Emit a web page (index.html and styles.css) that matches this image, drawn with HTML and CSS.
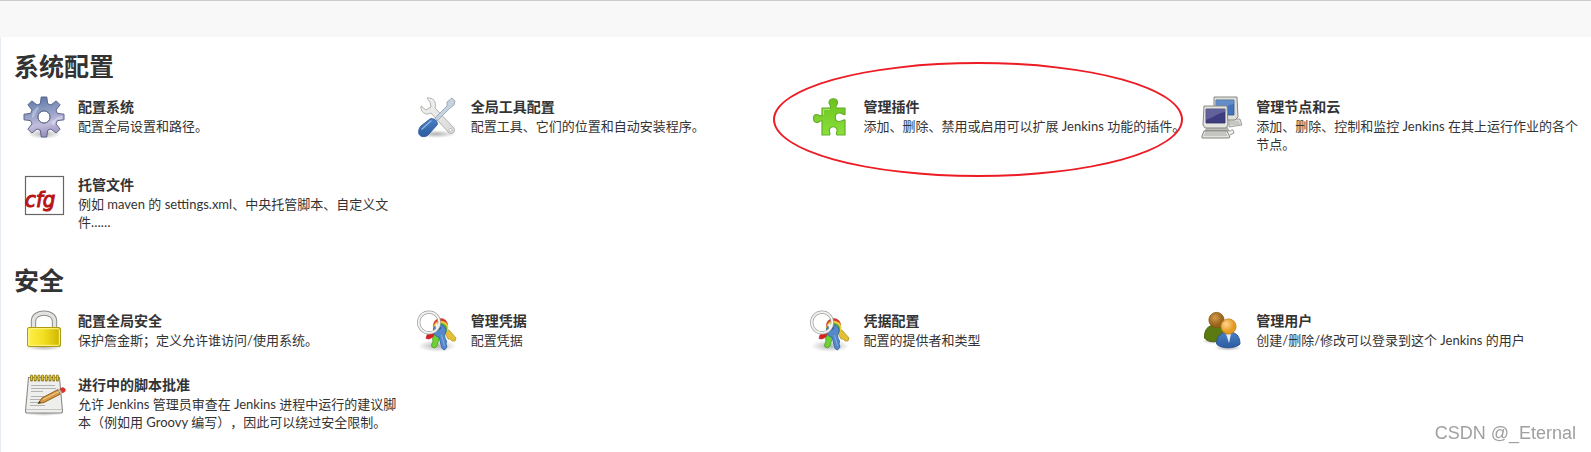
FILE: index.html
```html
<!DOCTYPE html>
<html lang="zh-CN">
<head>
    <meta charset="UTF-8">
    <meta name="viewport" content="width=device-width, initial-scale=1.0">
    <title>系统管理 [Jenkins]</title>
    <link rel="stylesheet" href="styles.css">
</head>
<body>

<svg class="defs" width="0" height="0" aria-hidden="true">
    <defs>
        <radialGradient id="shadow">
            <stop offset="0" stop-color="#000" stop-opacity="0.3"/>
            <stop offset="1" stop-color="#000" stop-opacity="0"/>
        </radialGradient>
        <linearGradient id="gear" x1="0" y1="0" x2="0.2" y2="1">
            <stop offset="0" stop-color="#5673a4"/>
            <stop offset="0.45" stop-color="#8f9dc4"/>
            <stop offset="0.75" stop-color="#c3bddd"/>
            <stop offset="1" stop-color="#9c96c0"/>
        </linearGradient>
        <linearGradient id="metal" x1="0" y1="0" x2="1" y2="1">
            <stop offset="0" stop-color="#f4f4f2"/>
            <stop offset="1" stop-color="#d8d9d7"/>
        </linearGradient>
        <linearGradient id="puzzle" x1="0" y1="0" x2="0" y2="1">
            <stop offset="0" stop-color="#6cc21c"/>
            <stop offset="1" stop-color="#8be03c"/>
        </linearGradient>
        <linearGradient id="yellow" x1="0" y1="0" x2="1" y2="0">
            <stop offset="0" stop-color="#fff04a"/>
            <stop offset="0.5" stop-color="#f2de20"/>
            <stop offset="1" stop-color="#cdb400"/>
        </linearGradient>
        <linearGradient id="blue" x1="0" y1="0" x2="0" y2="1">
            <stop offset="0" stop-color="#4a80c4"/>
            <stop offset="1" stop-color="#2c5ba0"/>
        </linearGradient>
        <radialGradient id="brown" cx="0.4" cy="0.35">
            <stop offset="0" stop-color="#d29a4a"/>
            <stop offset="1" stop-color="#9a621a"/>
        </radialGradient>
        <radialGradient id="orange" cx="0.35" cy="0.35">
            <stop offset="0" stop-color="#ffd590"/>
            <stop offset="1" stop-color="#e59a22"/>
        </radialGradient>
        <symbol id="keys" viewBox="0 0 48 48">
            <ellipse cx="24" cy="39" rx="19" ry="6" fill="url(#shadow)"/>
            <path d="M21 24 14 28 13 31.500 16 32 24 28Z" fill="#dc2020" stroke="#b01818" stroke-width="0.6"/>
            <path d="M20 22C19 13 25 10 30 11.500C34 13 36 17 34.500 22L28 27Z" fill="#d63b2c"/>
            <path d="M31 24 36 23 43 31 42 34 39 34 37 32 35 32Z" fill="#e3bf38" stroke="#b8952a" stroke-width="0.8" stroke-linejoin="round"/>
            <path d="M20 23C20 15 26 12.500 31 14.500C35 16 36.500 20 34.500 25L28 28Z" fill="#edcb3a"/>
            <path d="M22 26 27 28 24 39 22 41 19 40 18.500 38 20 34 19.500 32Z" fill="#6fd136" stroke="#4ba023" stroke-width="0.8" stroke-linejoin="round"/>
            <path d="M20 25C20 18 26 15 30 16.500C34 18 35 22 33 26L28 29Z" fill="#58aa35"/>
            <path d="M20.500 23.500C20.500 18.500 25 17 28.500 18C33 19.500 34.500 24 31.500 28L32 31 33.500 34 33 37 34 40 31.500 43 29 41.500 26 30C23 30 20.500 27 20.500 23.500Z" fill="#5389cb" stroke="#3467a8" stroke-width="0.9" stroke-linejoin="round"/>
            <path d="M28.500 28 31.500 39" stroke="#86afe0" stroke-width="1"/>
            <path d="M23 23 26.500 21" stroke="#2d5994" stroke-width="3" stroke-linecap="round"/>
            <circle cx="16" cy="15.500" r="10.300" fill="none" stroke="#9c9e9b" stroke-width="3.200"/>
            <circle cx="16" cy="15.500" r="10.300" fill="none" stroke="#f2f2f0" stroke-width="1.800"/>
            <path d="M22 18 24 16 25.500 19 23.500 22Z" fill="#f2f2f0"/>
        </symbol>
    </defs>
</svg>

<header class="breadcrumb-bar"></header>

<main class="main-panel">
    <section class="section">
        <h2>系统配置</h2>
        <div class="section-items">
            <a class="item" href="#configure">
                <svg class="icon" viewBox="0 0 48 48" aria-hidden="true">
                    <ellipse cx="24" cy="41" rx="17" ry="5" fill="url(#shadow)"/>
                    <path fill="url(#gear)" fill-rule="evenodd" stroke="#5b6488" stroke-width="1" stroke-linejoin="round" d="M20.400 10.600 21.200 4H26.800L27.600 10.600 30.900 12 36.200 7.900 40.100 11.800 36 17.100 37.400 20.400 44 21.200V26.800L37.400 27.600 36 30.900 40.100 36.200 36.200 40.100 30.900 36 27.600 37.400 26.800 44H21.200L20.400 37.400 17.100 36 11.800 40.100 7.900 36.200 12 30.900 10.600 27.600 4 26.800V21.200L10.600 20.400 12 17.100 7.900 11.800 11.800 7.900 17.100 12ZM24 18a6 6 0 1 0 0 12a6 6 0 1 0 0-12Z"/>
                    <path d="M12 25c4-1 3-6 6-8 2-2 0-4 0-4l-5 5-1 4z" fill="#fff" opacity="0.3"/>
                    <path d="M31 30c1-4 5-3 6-6l5-1v3l-6 1-2 6z" fill="#fff" opacity="0.3"/>
                    <circle cx="24" cy="24" r="6" fill="#fff" stroke="#5b6488" stroke-width="1"/>
                </svg>
                <dl class="text">
                    <dt>配置系统</dt>
                    <dd>配置全局设置和路径。</dd>
                </dl>
            </a>
            <a class="item" href="#configureTools">
                <svg class="icon" viewBox="0 0 48 48" aria-hidden="true">
                    <ellipse cx="23" cy="41" rx="20" ry="4" fill="url(#shadow)"/>
                    <path d="M14 5c6-1 10 4 8 10L41 35c2 4-2 7-5 5L18 20c-5 3-11-1-10-7l5 4 5-3-1-5z" fill="url(#metal)" stroke="#abadaa" stroke-width="0.9" stroke-linejoin="round"/>
                    <circle cx="37.500" cy="37" r="1.500" fill="#fff" stroke="#abadaa" stroke-width="0.7"/>
                    <path d="M22 25 34 13 34 9 39 5 42 8 41 12 37 15 24 28Z" fill="#c9d3df" stroke="#94a4b5" stroke-width="0.9" stroke-linejoin="round"/>
                    <path d="M8 33 17 26c3-2 9 3 7 6L16 41c-3 4-9 3-10 0-1-3 0-6 2-8z" fill="url(#blue)" stroke="#2f5a99" stroke-width="0.9"/>
                    <path d="M9 36 18 28" stroke="#8fb2e0" stroke-width="1.500" stroke-linecap="round"/>
                </svg>
                <dl class="text">
                    <dt>全局工具配置</dt>
                    <dd>配置工具、它们的位置和自动安装程序。</dd>
                </dl>
            </a>
            <a class="item highlighted" href="#pluginManager">
                <svg class="icon" viewBox="0 0 48 48" aria-hidden="true">
                    <path d="M16 15H24C26 13 23 12 23 9.500C23 4.500 31.500 4.500 31.500 9.500C31.500 12 29 13 30 15H39V21.500C37 22 36 19.500 33 20C28 20.500 28 28.500 33 28.500C36 28.500 37 26.500 39 27V42H31C29 40 32 39 31 36C29.500 33 24.500 33 23.500 36C22.500 39 25 40 23.500 42H16V28C14 26.500 13 30 10.500 29.500C6.500 29 6.500 21.500 10.500 21.500C13 21.500 14 24 16 22.500Z" fill="url(#puzzle)" stroke="#65ad2c" stroke-width="1.200" stroke-linejoin="round"/>
                    <path d="M17.500 22V16.500H24" fill="none" stroke="#a9e873" stroke-width="1"/>
                </svg>
                <dl class="text">
                    <dt>管理插件</dt>
                    <dd>添加、删除、禁用或启用可以扩展 Jenkins 功能的插件。</dd>
                </dl>
            </a>
            <a class="item" href="#computer">
                <svg class="icon" viewBox="0 0 48 48" aria-hidden="true">
                    <path d="M31 26 42 26 44 32 31 34Z" fill="#dcdcd8" stroke="#8c8e89" stroke-width="0.8"/>
                    <path d="M32 29h9M32 31h10" stroke="#a5a7a2" stroke-width="0.8"/>
                    <path d="M16 4H39L40 24 37 27H16Z" fill="#dededa" stroke="#878985" stroke-width="1" stroke-linejoin="round"/>
                    <path d="M18 7H36V22H18Z" fill="#4373b8" stroke="#365983" stroke-width="0.8"/>
                    <path d="M18 7H36V11C30 12 25 15 18 19Z" fill="#82a8db" opacity="0.5"/>
                    <path d="M10 34H29L31 38H7Z" fill="#b8bab5" stroke="#878985" stroke-width="0.7"/>
                    <path d="M6 13H29L30 32 28 35H7L5 32Z" fill="#e4e4e0" stroke="#878985" stroke-width="1" stroke-linejoin="round"/>
                    <path d="M8 16H27V30H8Z" fill="#3d3d80" stroke="#34345e" stroke-width="0.8"/>
                    <path d="M8 16H27V19C20 20 16 24 8 27Z" fill="#7979af" opacity="0.6"/>
                    <path d="M6 38H29L32 44 31 45H4L4 43Z" fill="#e2e2de" stroke="#777974" stroke-width="0.9"/>
                    <path d="M7 40H28M6 42H29" stroke="#a7a9a3" stroke-width="1"/>
                    <path d="M31 38c3 0 2-2 4-1l1 3-4 2" fill="#eee" stroke="#8c8e89" stroke-width="0.9"/>
                </svg>
                <dl class="text">
                    <dt>管理节点和云</dt>
                    <dd>添加、删除、控制和监控 Jenkins 在其上运行作业的各个节点。</dd>
                </dl>
            </a>
            <a class="item" href="#configfiles">
                <svg class="icon" viewBox="0 0 48 48" aria-hidden="true">
                    <rect x="5.500" y="5.500" width="38" height="38" fill="#fff" stroke="#666" stroke-width="1.200"/>
                    <text class="cfg" x="5" y="36">cfg</text>
                </svg>
                <dl class="text">
                    <dt>托管文件</dt>
                    <dd>例如 maven 的 settings.xml、中央托管脚本、自定义文件……</dd>
                </dl>
            </a>
        </div>
    </section>

    <section class="section">
        <h2>安全</h2>
        <div class="section-items">
            <a class="item" href="#configureSecurity">
                <svg class="icon" viewBox="0 0 48 48" aria-hidden="true">
                    <ellipse cx="24" cy="40" rx="19" ry="4" fill="url(#shadow)"/>
                    <path d="M13.500 22V14C13.500 3.500 34.500 3.500 34.500 14V22" fill="none" stroke="#8b8d88" stroke-width="5.400"/>
                    <path d="M13.500 22V14C13.500 3.500 34.500 3.500 34.500 14V22" fill="none" stroke="#e3e4e1" stroke-width="3.400"/>
                    <rect x="7.500" y="20.500" width="33" height="19" rx="1.500" fill="url(#yellow)" stroke="#b09a10" stroke-width="1"/>
                    <rect x="8.700" y="21.700" width="30.600" height="16.600" rx="1" fill="none" stroke="#fff68c" stroke-width="1"/>
                </svg>
                <dl class="text">
                    <dt>配置全局安全</dt>
                    <dd>保护詹金斯；定义允许谁访问/使用系统。</dd>
                </dl>
            </a>
            <a class="item" href="#credentials">
                <svg class="icon" viewBox="0 0 48 48" aria-hidden="true"><use href="#keys"/></svg>
                <dl class="text">
                    <dt>管理凭据</dt>
                    <dd>配置凭据</dd>
                </dl>
            </a>
            <a class="item" href="#configureCredentials">
                <svg class="icon" viewBox="0 0 48 48" aria-hidden="true"><use href="#keys"/></svg>
                <dl class="text">
                    <dt>凭据配置</dt>
                    <dd>配置的提供者和类型</dd>
                </dl>
            </a>
            <a class="item" href="#securityRealm">
                <svg class="icon" viewBox="0 0 48 48" aria-hidden="true">
                    <ellipse cx="15" cy="34" rx="11" ry="3" fill="url(#shadow)"/>
                    <ellipse cx="30" cy="41" rx="14" ry="3" fill="url(#shadow)"/>
                    <path d="M6.500 31C6 23 10 18 17 18S26 23 25 31C21 36 10 36 6.500 31Z" fill="#5b7a12" stroke="#405a08" stroke-width="0.9"/>
                    <circle cx="18.500" cy="13" r="7.600" fill="url(#brown)" stroke="#82500f" stroke-width="0.8"/>
                    <path d="M18.500 37C18.500 29 23 25 30.500 25S42 29 42 37C38 42 22 42 18.500 37Z" fill="url(#blue)" stroke="#2a528f" stroke-width="0.9"/>
                    <path d="M28 27H33L31 36Z" fill="#e4eaf4"/>
                    <circle cx="30.500" cy="19.500" r="7.600" fill="url(#orange)" stroke="#c67d12" stroke-width="0.8"/>
                </svg>
                <dl class="text">
                    <dt>管理用户</dt>
                    <dd>创建/删除/修改可以登录到这个 Jenkins 的用户</dd>
                </dl>
            </a>
            <a class="item" href="#scriptApproval">
                <svg class="icon" viewBox="0 0 48 48" aria-hidden="true">
                    <ellipse cx="24" cy="42" rx="21" ry="3" fill="url(#shadow)"/>
                    <path d="M8.500 6.500H39.500L42.500 40Q42.500 42 41 42H7Q5.500 42 5.500 40Z" fill="#eeeeec" stroke="#8a8c87" stroke-width="1.100"/>
                    <path d="M6 38.500H42" stroke="#c4c5c1" stroke-width="1"/>
                    <path d="M11 14.500H35M11 17.500H36M11 20.500H23M11 25.500H32M10 28.500H24M10 31.500H18M10 34.500H25" stroke="#b3b4b1" stroke-width="1"/>
                    <path d="M11.500 5v4M15.200 5v4M18.900 5v4M22.600 5v4M26.300 5v4M30 5v4M33.700 5v4M37.400 5v4" stroke="#8d7a1c" stroke-width="3" stroke-linecap="round"/>
                    <path d="M11.500 5v3.500M15.200 5v3.500M18.900 5v3.500M22.600 5v3.500M26.300 5v3.500M30 5v3.500M33.700 5v3.500M37.400 5v3.500" stroke="#e2c837" stroke-width="1.400" stroke-linecap="round"/>
                    <path d="M18 32.500 22 27 38 18.500 40.500 23 24 31.500Z" fill="#d69a45" stroke="#85571b" stroke-width="0.9" stroke-linejoin="round"/>
                    <path d="M23 28.500 39 20.500" stroke="#f0c684" stroke-width="1.200"/>
                    <path d="M38 18.500 40 17.500 42.500 22 40.500 23Z" fill="#b8bab5"/>
                    <path d="M40 17.500 43 16.500Q46.500 17.500 45 20.500L42.500 22Z" fill="#e0322c" stroke="#c02a24" stroke-width="0.5"/>
                    <path d="M18 32.500 19.500 30 21 31.500Z" fill="#333"/>
                </svg>
                <dl class="text">
                    <dt>进行中的脚本批准</dt>
                    <dd>允许 Jenkins 管理员审查在 Jenkins 进程中运行的建议脚本（例如用 Groovy 编写），因此可以绕过安全限制。</dd>
                </dl>
            </a>
        </div>
    </section>
</main>

<div class="watermark">CSDN @_Eternal</div>

</body>
</html>
```
FILE: styles.css
```css
*,
*::after {
    box-sizing: border-box;
}
body {
    margin: 0;
    min-height: 100vh;
    display: flex;
    flex-direction: column;
    font-family: Lato, "Noto Sans CJK SC", sans-serif;
    font-size: 13px;
    color: #333;
    background-color: #fff;
    text-spacing-trim: space-all;
}
.defs {
    position: absolute;
}
.breadcrumb-bar {
    height: 37px;
    border-top: 1px solid #ccc;
    background-color: #f8f8f8;
}
.main-panel {
    flex: 1;
    padding: 14px 11px 0 8px;
    border-left: 1px solid #e6ecf2;
}
.section {
    margin-bottom: 16px;
}
h2 {
    margin: 0 0 12px;
    padding-left: 5px;
    font-size: 25px;
    line-height: 30px;
    font-weight: bold;
}
.section-items {
    display: grid;
    grid-template-columns: repeat(4, 1fr);
}
.item {
    position: relative;
    display: flex;
    align-items: flex-start;
    padding: 0 0 16px 11px;
    color: #333;
    text-decoration: none;
}
.icon {
    flex: none;
    width: 48px;
    height: 48px;
}
.text {
    flex: 1;
    margin: 0 0 0 10px;
    padding: 4px 0 2px;
}
.text dt {
    font-size: 14px;
    line-height: 20px;
    font-weight: bold;
}
.text dd {
    margin: 0;
    line-height: 18px;
}
.cfg {
    font-family: "DejaVu Sans Condensed", "DejaVu Sans", sans-serif;
    font-size: 22px;
    font-style: italic;
    fill: #b81414;
    stroke: #b81414;
    stroke-width: 1px;
}
/* red ring drawn round the plugin entry */
.highlighted::after {
    content: "";
    position: absolute;
    top: -31px;
    left: -22px;
    width: 410px;
    height: 115px;
    border: 2px solid #ed1c24;
    border-radius: 50%;
    pointer-events: none;
}
.watermark {
    position: fixed;
    right: 15px;
    bottom: 8px;
    font-family: "Liberation Sans", sans-serif;
    font-size: 18px;
    line-height: 22px;
    color: #a0a0a0;
}
```
